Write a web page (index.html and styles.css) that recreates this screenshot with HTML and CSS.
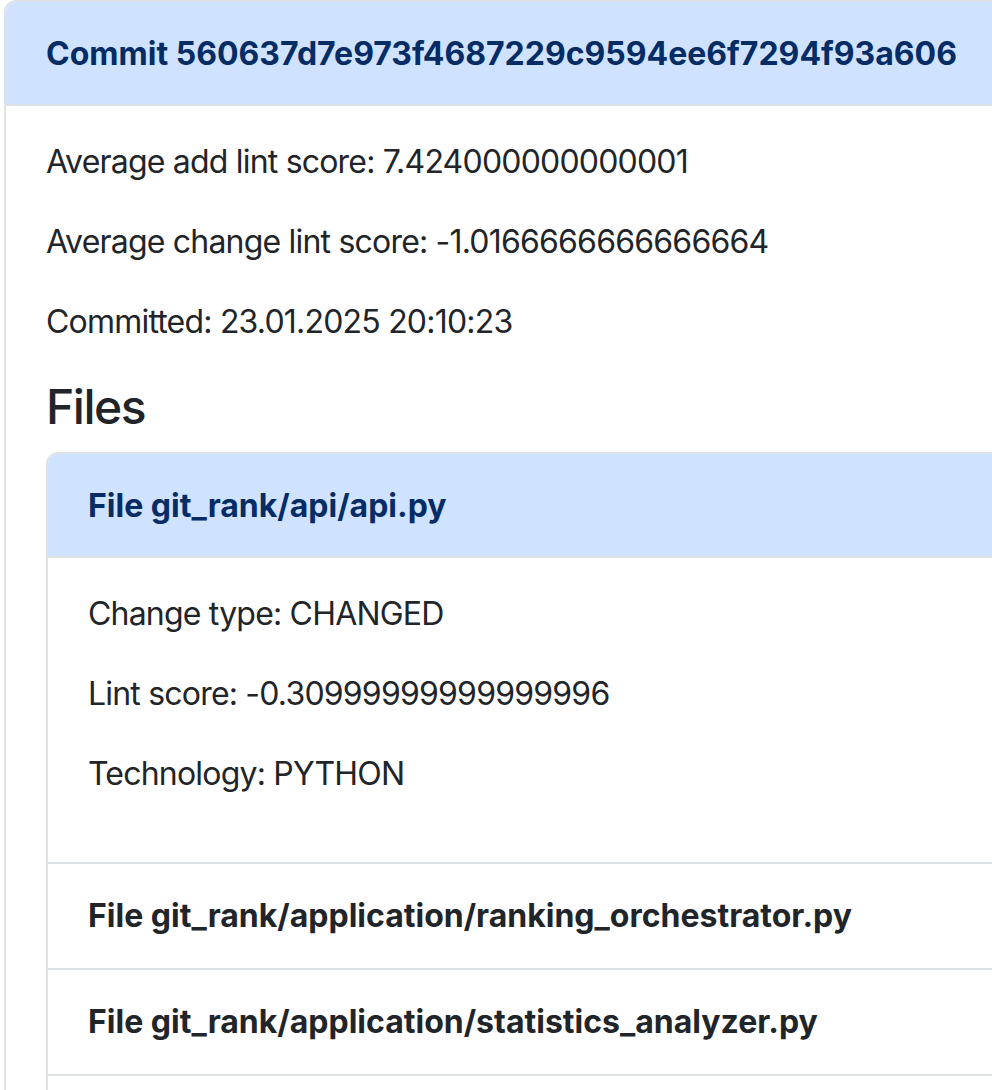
FILE: index.html
```html
<!DOCTYPE html>
<html lang="en">
<head>
<meta charset="utf-8">
<title>Commit</title>
<link rel="stylesheet" href="styles.css">
</head>
<body>
<div class="accordion outer">
  <div class="acc-item">
    <div class="acc-header open">Commit 560637d7e973f4687229c9594ee6f7294f93a606</div>
    <div class="acc-body">
      <p>Average add lint score: 7.424000000000001</p>
      <p>Average change lint score: -1.0166666666666664</p>
      <p>Committed: 23.01.2025 20:10:23</p>
      <h4>Files</h4>
      <div class="accordion inner">
        <div class="acc-item">
          <div class="acc-header open">File git_rank/api/api.py</div>
          <div class="acc-body">
            <p>Change type: CHANGED</p>
            <p>Lint score: -0.30999999999999996</p>
            <p>Technology: PYTHON</p>
          </div>
        </div>
        <div class="acc-item">
          <div class="acc-header">File git_rank/application/ranking_orchestrator.py</div>
        </div>
        <div class="acc-item">
          <div class="acc-header">File git_rank/application/statistics_analyzer.py</div>
        </div>
        <div class="acc-item">
          <div class="acc-header">File git_rank/application/statistics_service.py</div>
        </div>
      </div>
    </div>
  </div>
</div>
</body>
</html>
```

FILE: styles.css
```css
html, body {
  margin: 0;
  padding: 0;
  background: #fff;
  overflow: hidden;
}
body {
  font-family: Inter, "Liberation Sans", sans-serif;
  font-size: 32px;
  line-height: 48px;
  color: #212529;
  padding-left: 4px;
}
.outer {
  width: 1400px;
}
.accordion {
  border: 2px solid #dee2e6;
  border-radius: 12px;
  overflow: hidden;
}
.acc-item + .acc-item {
  border-top: 2px solid #dee2e6;
}
.acc-header {
  padding: 32px 40px;
  line-height: 40px;
  font-weight: 700;
  color: #212529;
  background: #fff;
  white-space: nowrap;
}
.acc-header.open {
  background: #cfe2ff;
  color: #052c65;
  box-shadow: inset 0 -2px 0 #dee2e6;
}
.acc-body {
  padding: 32px 40px;
}
p {
  margin: 0 0 32px;
  letter-spacing: -0.8px;
  white-space: nowrap;
}
h4 {
  margin: 0 0 16px;
  font-size: 48px;
  line-height: 58px;
  font-weight: 500;
  letter-spacing: -1.5px;
}
```
